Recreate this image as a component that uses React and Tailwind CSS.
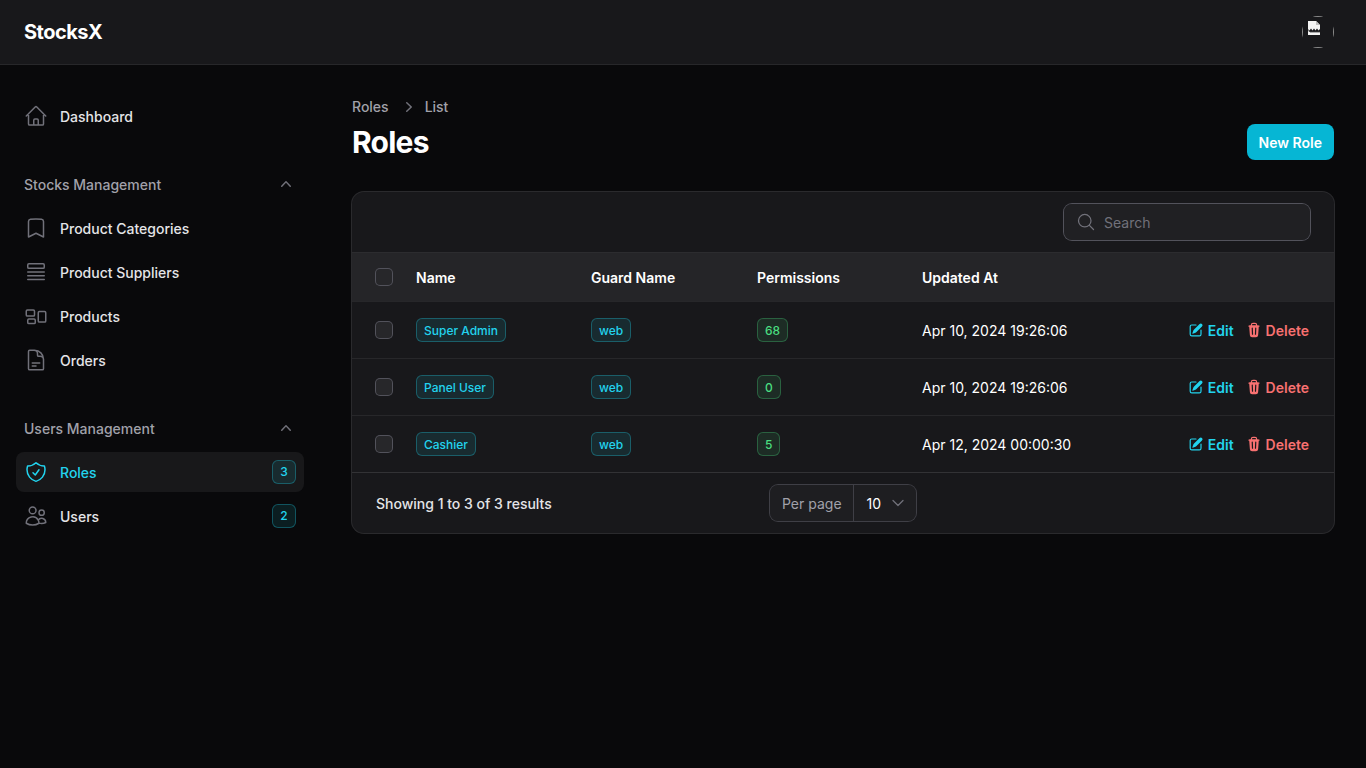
import { ChevronDown } from "lucide-react"

const ICONS = {
  home: "M2.25 12l8.954-8.955c.44-.439 1.152-.439 1.591 0L21.75 12M4.5 9.75v10.125c0 .621.504 1.125 1.125 1.125H9.75v-4.875c0-.621.504-1.125 1.125-1.125h2.25c.621 0 1.125.504 1.125 1.125V21h4.125c.621 0 1.125-.504 1.125-1.125V9.75M8.25 21h8.25",
  bookmark: "M17.593 3.322c1.1.128 1.907 1.077 1.907 2.185V21L12 17.25 4.5 21V5.507c0-1.108.806-2.057 1.907-2.185a48.507 48.507 0 0111.186 0z",
  queue: "M3.75 12h16.5m-16.5 3.75h16.5m-16.5 3.75h16.5M3.75 4.875c0-.621.504-1.125 1.125-1.125h14.25c.621 0 1.125.504 1.125 1.125v2.25c0 .621-.504 1.125-1.125 1.125H4.875A1.125 1.125 0 013.75 7.125v-2.25z",
  group: "M2.25 7.125C2.25 6.504 2.754 6 3.375 6h6c.621 0 1.125.504 1.125 1.125v3.75c0 .621-.504 1.125-1.125 1.125h-6a1.125 1.125 0 01-1.125-1.125v-3.75zM14.25 8.625c0-.621.504-1.125 1.125-1.125h5.25c.621 0 1.125.504 1.125 1.125v8.25c0 .621-.504 1.125-1.125 1.125h-5.25a1.125 1.125 0 01-1.125-1.125v-8.25zM3.75 16.125c0-.621.504-1.125 1.125-1.125h5.25c.621 0 1.125.504 1.125 1.125v2.25c0 .621-.504 1.125-1.125 1.125h-5.25a1.125 1.125 0 01-1.125-1.125v-2.25z",
  doc: "M19.5 14.25v-2.625a3.375 3.375 0 00-3.375-3.375h-1.5A1.125 1.125 0 0113.5 7.125v-1.5a3.375 3.375 0 00-3.375-3.375H8.25m0 12.75h7.5m-7.5 3H12M10.5 2.25H5.625c-.621 0-1.125.504-1.125 1.125v17.25c0 .621.504 1.125 1.125 1.125h12.75c.621 0 1.125-.504 1.125-1.125V11.25a9 9 0 00-9-9z",
  shield: "M9 12.75L11.25 15 15 9.75m-3-7.036A11.959 11.959 0 013.598 6 11.99 11.99 0 003 9.749c0 5.592 3.824 10.29 9 11.623 5.176-1.332 9-6.03 9-11.622 0-1.31-.21-2.571-.598-3.751h-.152c-3.196 0-6.1-1.248-8.25-3.285z",
  users: "M15 19.128a9.38 9.38 0 002.625.372 9.337 9.337 0 004.121-.952 4.125 4.125 0 00-7.533-2.493M15 19.128v-.003c0-1.113-.285-2.16-.786-3.07M15 19.128v.106A12.318 12.318 0 018.624 21c-2.331 0-4.512-.645-6.374-1.766l-.001-.109a6.375 6.375 0 0111.964-3.07M12 6.375a3.375 3.375 0 11-6.75 0 3.375 3.375 0 016.75 0zm8.25 2.25a2.625 2.625 0 11-5.25 0 2.625 2.625 0 015.25 0z",
  search: "M21 21l-5.197-5.197m0 0A7.5 7.5 0 105.196 5.196a7.5 7.5 0 0010.607 10.607z",
}

const rows = [
  { name: "Super Admin", perms: "68", updated: "Apr 10, 2024 19:26:06" },
  { name: "Panel User", perms: "0", updated: "Apr 10, 2024 19:26:06" },
  { name: "Cashier", perms: "5", updated: "Apr 12, 2024 00:00:30" },
]

function Icon({ name, className }) {
  return (
    <svg viewBox="0 0 24 24" fill="none" stroke="currentColor" strokeWidth="1.5" strokeLinecap="round" strokeLinejoin="round" className={className}>
      <path d={ICONS[name]} />
    </svg>
  )
}

function NavItem({ icon, label, badge, active }) {
  return (
    <div className={`flex h-10 items-center gap-3 rounded-lg px-2 ${active ? "bg-[#18181a]" : ""}`}>
      <Icon name={icon} className={`size-6 shrink-0 ${active ? "text-[#22d3ee]" : "text-[#71717a]"}`} />
      <span className={`flex-1 pt-0.5 text-sm font-[450] ${active ? "text-[#22d3ee]" : "text-[#e4e4e7]"}`}>{label}</span>
      {badge && (
        <span className="flex size-6 items-center justify-center rounded-md bg-[#22d3ee]/10 text-xs font-medium text-[#22d3ee] ring-1 ring-inset ring-[#22d3ee]/30">
          {badge}
        </span>
      )}
    </div>
  )
}

function NavGroup({ label, children }) {
  return (
    <div className="mt-9">
      <div className="flex h-6 items-center justify-between px-2">
        <span className="pt-0.5 text-sm font-[450] text-[#a1a1aa]">{label}</span>
        <svg viewBox="0 0 20 20" fill="currentColor" className="size-5 text-[#71717a]">
          <path fillRule="evenodd" clipRule="evenodd" d="M14.77 12.79a.75.75 0 01-1.06-.02L10 8.832 6.29 12.77a.75.75 0 11-1.08-1.04l4.25-4.5a.75.75 0 011.08 0l4.25 4.5a.75.75 0 01-.02 1.06z" />
        </svg>
      </div>
      <div className="mt-3 flex flex-col gap-1">{children}</div>
    </div>
  )
}

function Checkbox() {
  return <span className="block size-4 rounded-[4px] bg-[#27272a] ring-1 ring-[#52525b]" />
}

function Badge({ children, green }) {
  return (
    <span className={`flex h-6 w-fit items-center rounded-md px-2 pt-0.5 text-xs font-[450] ring-1 ring-inset ${green ? "bg-[#4ade80]/10 text-[#4ade80] ring-[#4ade80]/30" : "bg-[#22d3ee]/10 text-[#22d3ee] ring-[#22d3ee]/30"}`}>
      {children}
    </span>
  )
}

function TableRow({ row }) {
  return (
    <tr className="h-[57px] border-t border-[#27272a]">
      <td className="pl-6"><Checkbox /></td>
      <td><Badge>{row.name}</Badge></td>
      <td><Badge>web</Badge></td>
      <td><Badge green>{row.perms}</Badge></td>
      <td className="pt-0.5 text-sm text-white">{row.updated}</td>
      <td className="pr-[25px]">
        <div className="flex items-center justify-end gap-3 text-sm font-semibold">
          <span className="flex items-center gap-1 text-[#22d3ee]">
            <svg viewBox="0 0 20 20" fill="currentColor" className="size-4">
              <path d="M5.433 13.917l1.262-3.155A4 4 0 017.58 9.42l6.92-6.918a2.121 2.121 0 013 3l-6.92 6.918c-.383.383-.84.685-1.343.886l-3.154 1.262a.5.5 0 01-.65-.65z" />
              <path d="M3.5 5.75c0-.69.56-1.25 1.25-1.25H10A.75.75 0 0010 3H4.75A2.75 2.75 0 002 5.75v9.5A2.75 2.75 0 004.75 18h9.5A2.75 2.75 0 0017 15.25V10a.75.75 0 00-1.5 0v5.25c0 .69-.56 1.25-1.25 1.25h-9.5c-.69 0-1.25-.56-1.25-1.25v-9.5z" />
            </svg>
            <span className="pt-0.5">Edit</span>
          </span>
          <span className="flex items-center gap-1 text-[#f87171]">
            <svg viewBox="0 0 20 20" fill="currentColor" className="size-4">
              <path fillRule="evenodd" clipRule="evenodd" d="M8.75 1A2.75 2.75 0 006 3.75v.443c-.795.077-1.584.176-2.365.298a.75.75 0 10.23 1.482l.149-.022.841 10.518A2.75 2.75 0 007.596 19h4.807a2.75 2.75 0 002.742-2.53l.841-10.52.149.023a.75.75 0 00.23-1.482A41.03 41.03 0 0014 4.193V3.75A2.75 2.75 0 0011.25 1h-2.5zM10 4c.84 0 1.673.025 2.5.075V3.75c0-.69-.56-1.25-1.25-1.25h-2.5c-.69 0-1.25.56-1.25 1.25v.325C8.327 4.025 9.16 4 10 4zM8.58 7.72a.75.75 0 00-1.5.06l.3 7.5a.75.75 0 101.5-.06l-.3-7.5zm4.34.06a.75.75 0 10-1.5-.06l-.3 7.5a.75.75 0 101.5.06l.3-7.5z" />
            </svg>
            <span className="pt-0.5">Delete</span>
          </span>
        </div>
      </td>
    </tr>
  )
}

export default function App() {
  return (
    <div className="min-h-screen bg-[#09090b] font-['Inter',sans-serif] text-white antialiased">
      <header className="flex h-[65px] items-center justify-between border-b border-[#27272a] bg-[#18181b] pl-6 pr-8">
        <span className="text-xl font-bold tracking-tight">StocksX</span>
        <div className="size-8 overflow-hidden rounded-full">
          <div className="relative size-8 border border-[#8a8a8a]">
            <svg viewBox="0 0 12 14" className="absolute left-[5px] top-[4px] h-3.5 w-3">
              <path d="M0 0h8l4 4v10H0z" fill="#f4f4f4" />
              <path d="M8 0v4h4z" fill="#bdbdbd" />
              <path d="M0 8l1.5 1.5L3 7.5l1.5 2L6 7.5l1.5 2L9 7.5l1.5 2L12 8v2.5l-1 1.5-1-1.5-1 1.5-1-1.5-1 1.5-1-1.5-1 1.5-1-1.5-1 1.5-1-1.5-1 .5z" fill="#18181b" />
            </svg>
          </div>
        </div>
      </header>

      <div className="flex">
        <aside className="w-80 shrink-0 px-4 pt-[31px]">
          <NavItem icon="home" label="Dashboard" />
          <NavGroup label="Stocks Management">
            <NavItem icon="bookmark" label="Product Categories" />
            <NavItem icon="queue" label="Product Suppliers" />
            <NavItem icon="group" label="Products" />
            <NavItem icon="doc" label="Orders" />
          </NavGroup>
          <NavGroup label="Users Management">
            <NavItem icon="shield" label="Roles" badge="3" active />
            <NavItem icon="users" label="Users" badge="2" />
          </NavGroup>
        </aside>

        <main className="flex-1 px-8 pt-8">
          <nav className="flex h-5 items-center text-sm font-[450] text-[#a1a1aa]">
            Roles
            <svg viewBox="0 0 20 20" fill="currentColor" className="ml-2.5 mr-1.5 size-5 text-[#71717a]">
              <path fillRule="evenodd" clipRule="evenodd" d="M7.21 14.77a.75.75 0 01.02-1.06L11.168 10 7.23 6.29a.75.75 0 111.04-1.08l4.5 4.25a.75.75 0 010 1.08l-4.5 4.25a.75.75 0 01-1.06-.02z" />
            </svg>
            List
          </nav>
          <div className="mt-[7px] flex items-center justify-between">
            <h1 className="text-3xl font-bold tracking-tight">Roles</h1>
            <button className="h-9 rounded-lg bg-[#06b6d4] px-3 pt-0.5 text-sm font-semibold text-white">New Role</button>
          </div>

          <section className="mt-8 overflow-hidden rounded-xl bg-[#18181b] ring-1 ring-[#2a2a2d]">
            <div className="flex h-[60px] items-center justify-end pr-6">
              <div className="flex h-9 w-[246px] items-center gap-2 rounded-lg bg-[#27272a]/60 px-3 ring-1 ring-[#52525b]">
                <Icon name="search" className="size-5 text-[#71717a]" />
                <span className="pt-0.5 text-sm text-[#71717a]">Search</span>
              </div>
            </div>
            <table className="w-full table-fixed border-collapse">
              <colgroup>
                <col className="w-[64px]" />
                <col className="w-[175px]" />
                <col className="w-[166px]" />
                <col className="w-[165px]" />
                <col className="w-[230px]" />
                <col />
              </colgroup>
              <thead>
                <tr className="h-[49px] border-t border-[#2c2c2f] bg-[#252528] text-left text-sm">
                  <th className="pl-6"><Checkbox /></th>
                  <th className="pt-0.5 font-semibold">Name</th>
                  <th className="pt-0.5 font-semibold">Guard Name</th>
                  <th className="pt-0.5 font-semibold">Permissions</th>
                  <th className="pt-0.5 font-semibold">Updated At</th>
                  <th />
                </tr>
              </thead>
              <tbody>
                {rows.map((r) => (
                  <TableRow key={r.name} row={r} />
                ))}
              </tbody>
            </table>
            <div className="-mt-px grid h-[61px] grid-cols-[1fr_auto_1fr] items-center border-t border-[#323235] px-6">
              <span className="pt-0.5 text-sm font-[450] text-[#e4e4e7]">Showing 1 to 3 of 3 results</span>
              <div className="flex h-9 w-[146px] items-center rounded-lg bg-[#27272a]/40 text-sm ring-1 ring-[#3f3f46]">
                <span className="flex h-full items-center border-r border-[#3f3f46] pl-3 pr-[11px] pt-0.5 text-[#a1a1aa]">Per page</span>
                <span className="pl-[13px] pt-0.5 text-white">10</span>
                <ChevronDown strokeWidth={1.5} className="ml-auto mr-2 size-5 text-[#71717a]" />
              </div>
              <span />
            </div>
          </section>
        </main>
      </div>
    </div>
  )
}
